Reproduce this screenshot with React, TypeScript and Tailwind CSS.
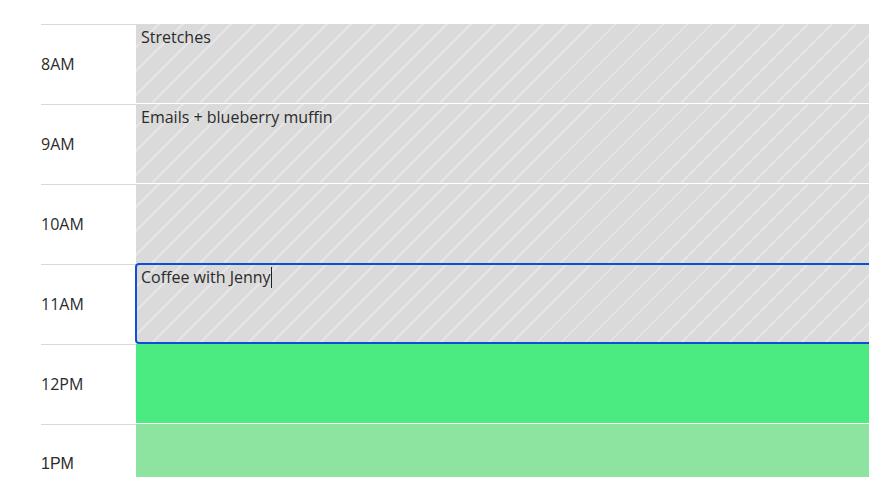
const stripes =
  'bg-[#dadada] bg-[repeating-linear-gradient(135deg,#dadada_0px,#dadada_15px,#e5e5e5_15px,#e5e5e5_17px)]';

type Slot = {
  label: string;
  text?: string;
  kind: 'busy' | 'green' | 'lightgreen';
  focused?: boolean;
  labelFont?: string;
};

const slots: Slot[] = [
  { label: '8AM', text: 'Stretches', kind: 'busy' },
  { label: '9AM', text: 'Emails + blueberry muffin', kind: 'busy' },
  { label: '10AM', kind: 'busy' },
  { label: '11AM', text: 'Coffee with Jenny', kind: 'busy', focused: true },
  { label: '12PM', kind: 'green' },
  { label: '1PM', kind: 'lightgreen', labelFont: "font-['Liberation_Sans',sans-serif]" },
];

function Cell({ slot }: { slot: Slot }) {
  const bg =
    slot.kind === 'busy' ? stripes : slot.kind === 'green' ? 'bg-[#4ceb82]' : 'bg-[#8de4a0]';
  const focus = slot.focused
    ? 'outline-2 outline-offset-[-1px] outline-[#0e4fd6] rounded-[3px] relative z-10'
    : '';
  return (
    <div className={`flex-1 h-[79px] mb-px ${bg} ${focus}`}>
      {slot.text && (
        <div className="px-[5px] pt-[2px] text-[16px] leading-[22px] text-[#2b2b2b] flex items-center">
          <span>{slot.text}</span>
          {slot.focused && <span className="inline-block w-px h-[21px] bg-[#222]" />}
        </div>
      )}
    </div>
  );
}

export default function App() {
  return (
    <div className="w-full h-[477px] overflow-hidden bg-white font-['Open_Sans',sans-serif] pt-[24px] pl-[41px]">
      <div className="mr-[-12px]">
        {slots.map((s) => (
          <div key={s.label} className="flex">
            <div className="w-[95px] h-[80px] border-t border-[#d9d9d9]">
              <div
                className={`pt-[28px] text-[16px] leading-[22px] text-[#2b2b2b] ${s.labelFont ?? ''}`}
              >
                {s.label}
              </div>
            </div>
            <Cell slot={s} />
          </div>
        ))}
      </div>
    </div>
  );
}
